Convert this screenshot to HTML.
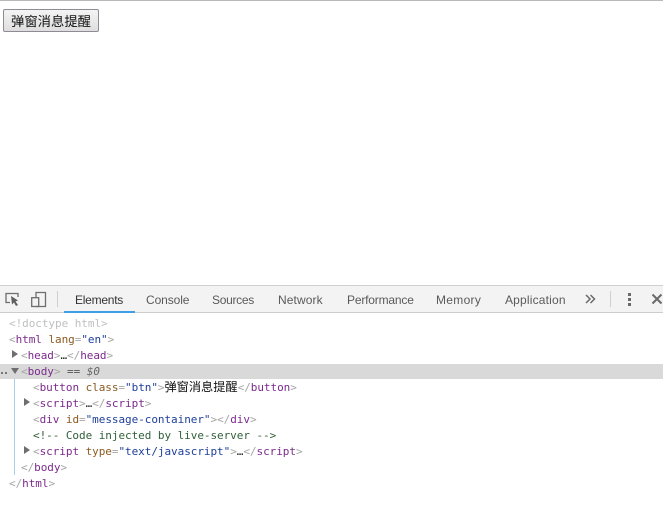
<!DOCTYPE html>
<html lang="zh">
<head>
<meta charset="utf-8">
<style>
html,body{margin:0;padding:0;width:663px;height:521px;overflow:hidden;background:#fff}
.a{position:absolute}
#top{left:0;top:0;width:663px;height:1px;background:#b9b9b9}
#btn{left:3px;top:9px;width:96px;height:23px;box-sizing:border-box;border:1px solid #8f8a94;background:linear-gradient(#f4f4f4,#dedede);border-radius:2px;font:13.33px/21px "Noto Sans CJK SC","WenQuanYi Zen Hei",sans-serif;color:#111;text-align:center;white-space:nowrap}
#bar{left:0;top:285px;width:663px;height:26px;background:#f3f3f3;border-top:1px solid #cfcfcf;border-bottom:1px solid #cdcdcd}
.t{position:absolute;top:292px;font:12px/16px "Liberation Sans",sans-serif;color:#5a5a5a;white-space:nowrap}
.l{position:absolute;font:11px/16px "DejaVu Sans Mono",monospace;letter-spacing:-.05px;color:#a5a5a5;white-space:pre;height:16px}
.p{color:#7b2a8c}
.k{color:#8a5a20}
.v{color:#1f3f9a}
.b{color:#222}
.tri{position:absolute;width:0;height:0}
.r{border-left:6px solid #6e6e6e;border-top:4px solid transparent;border-bottom:4px solid transparent}
</style>
</head>
<body>
<div class="a" id="top"></div>
<div class="a" id="btn">弹窗消息提醒</div>

<div class="a" id="bar"></div>
<svg class="a" style="left:0;top:285px" width="60" height="28" viewBox="0 0 60 28">
<path d="M10 17.500H6V8.500H18V12" fill="none" stroke="#6e6e6e" stroke-width="1.300"/>
<path d="M11 11L18 15.500L15.500 16.500L18 20L16 21L14 17.500L12 19.500Z" fill="#5f5f5f"/>
<path d="M36 13V7.500H45.500V21.500H36" fill="none" stroke="#6e6e6e" stroke-width="1.300"/>
<rect x="31.700" y="12.700" width="7" height="8.800" fill="none" stroke="#6e6e6e" stroke-width="1.300"/>
<rect x="57" y="6" width="1" height="16" fill="#cfcfcf"/>
</svg>
<div class="t" style="left:75px;color:#333;letter-spacing:-.25px">Elements</div>
<div class="a" style="left:64px;top:311px;width:71px;height:2px;background:#3f9fe6"></div>
<div class="t" style="left:146px;letter-spacing:-.1px">Console</div>
<div class="t" style="left:212px;letter-spacing:-.3px">Sources</div>
<div class="t" style="left:278px;letter-spacing:.1px">Network</div>
<div class="t" style="left:347px;letter-spacing:-.18px">Performance</div>
<div class="t" style="left:436px;letter-spacing:.3px">Memory</div>
<div class="t" style="left:505px;letter-spacing:.18px">Application</div>
<svg class="a" style="left:580px;top:285px" width="83" height="28" viewBox="0 0 83 28">
<path d="M6 10L10 14L6 18M10.500 10L14.500 14L10.500 18" fill="none" stroke="#6a6a6a" stroke-width="1.500"/>
<rect x="30" y="6" width="1" height="16" fill="#cfcfcf"/>
<rect x="48" y="8" width="3" height="3" fill="#6a6a6a"/>
<rect x="48" y="13" width="3" height="3" fill="#6a6a6a"/>
<rect x="48" y="18" width="3" height="3" fill="#6a6a6a"/>
<path d="M72.500 9.500L81.500 18.500M81.500 9.500L72.500 18.500" fill="none" stroke="#6a6a6a" stroke-width="2"/>
</svg>

<div class="a" style="left:0;top:364px;width:663px;height:15px;background:#d9d9d9"></div>
<div class="a" style="left:14px;top:379px;width:1px;height:96px;background:#a9cfe8"></div>

<div class="l" style="left:9px;top:316px;color:#c0c0c0">&lt;!doctype html&gt;</div>
<div class="l" style="left:9px;top:332px">&lt;<span class="p">html</span> <span class="k">lang</span>=<span class="v">"en"</span>&gt;</div>
<div class="tri r" style="left:12px;top:350px"></div>
<div class="l" style="left:21px;top:348px">&lt;<span class="p">head</span>&gt;<span class="b">…</span>&lt;/<span class="p">head</span>&gt;</div>
<div class="a" style="left:1px;top:372px;width:2px;height:2px;background:#777"></div>
<div class="a" style="left:5px;top:372px;width:2px;height:2px;background:#777"></div>
<div class="tri" style="left:11px;top:368px;border-top:6px solid #6e6e6e;border-left:4px solid transparent;border-right:4px solid transparent"></div>
<div class="l" style="left:21px;top:364px">&lt;<span class="p">body</span>&gt; <span style="color:#555">==</span> <i style="color:#666">$0</i></div>
<div class="l" style="left:33px;top:378px">&lt;<span class="p">button</span> <span class="k">class</span>=<span class="v">"btn"</span>&gt;<span style="color:#111;font:12.200px/16px 'Noto Sans CJK SC',sans-serif;letter-spacing:0">弹窗消息提醒</span>&lt;/<span class="p">button</span>&gt;</div>
<div class="tri r" style="left:24px;top:398px"></div>
<div class="l" style="left:33px;top:396px">&lt;<span class="p">script</span>&gt;<span class="b">…</span>&lt;/<span class="p">script</span>&gt;</div>
<div class="l" style="left:33px;top:412px">&lt;<span class="p">div</span> <span class="k">id</span>=<span class="v">"message-container"</span>&gt;&lt;/<span class="p">div</span>&gt;</div>
<div class="l" style="left:33px;top:428px;color:#2f5f3a">&lt;!-- Code injected by live-server --&gt;</div>
<div class="tri r" style="left:24px;top:446px"></div>
<div class="l" style="left:33px;top:444px">&lt;<span class="p">script</span> <span class="k">type</span>=<span class="v">"text/javascript"</span>&gt;<span class="b">…</span>&lt;/<span class="p">script</span>&gt;</div>
<div class="l" style="left:21px;top:460px">&lt;/<span class="p">body</span>&gt;</div>
<div class="l" style="left:9px;top:476px">&lt;/<span class="p">html</span>&gt;</div>
</body>
</html>
